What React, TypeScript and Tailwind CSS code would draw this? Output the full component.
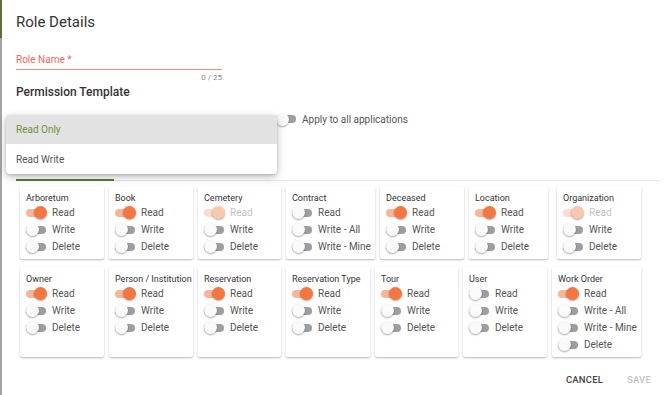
import React from 'react';

type Perm = { label: string; state: 'on' | 'off' | 'dim' };
type Entity = { name: string; width: string; perms: Perm[] };

const rw = (read: Perm['state'], labels = ['Write', 'Delete']): Perm[] => [
  { label: 'Read', state: read },
  ...labels.map((l) => ({ label: l, state: 'off' as const })),
];

const ROW_ONE: Entity[] = [
  { name: 'Arboretum', width: 'w-[84px]', perms: rw('on') },
  { name: 'Book', width: 'w-[84px]', perms: rw('on') },
  { name: 'Cemetery', width: 'w-[83px]', perms: rw('dim') },
  { name: 'Contract', width: 'w-[89px]', perms: rw('off', ['Write - All', 'Write - Mine']) },
  { name: 'Deceased', width: 'w-[84px]', perms: rw('on') },
  { name: 'Location', width: 'w-[79px] mr-[4px]', perms: rw('on') },
  { name: 'Organization', width: 'w-[84px]', perms: rw('dim') },
];

const ROW_TWO: Entity[] = [
  { name: 'Owner', width: 'w-[84px]', perms: rw('on') },
  { name: 'Person / Institution', width: 'w-[84px]', perms: rw('on') },
  { name: 'Reservation', width: 'w-[83px]', perms: rw('on') },
  { name: 'Reservation Type', width: 'w-[84px]', perms: rw('on') },
  { name: 'Tour', width: 'w-[83px]', perms: rw('on') },
  { name: 'User', width: 'w-[84px]', perms: rw('off') },
  { name: 'Work Order', width: 'w-[89px]', perms: rw('on', ['Write - All', 'Write - Mine', 'Delete']) },
];

const Toggle = ({ state }: { state: Perm['state'] }) => {
  const track =
    state === 'on' ? 'bg-[#f8b597]' : state === 'dim' ? 'bg-[#fcdccd]' : 'bg-[#9e9e9e]';
  const thumb =
    state === 'on'
      ? 'left-[8px] bg-[#f5773f]'
      : state === 'dim'
        ? 'left-[8px] bg-[#fbc8af]'
        : 'left-0 bg-[#fafafa]';
  return (
    <div className="relative w-[20px] h-[13px] flex items-center flex-shrink-0">
      <div className={`w-full h-[8px] rounded-full ${track}`}></div>
      <div
        className={`absolute top-0 w-[13px] h-[13px] rounded-full shadow-[0_1px_2px_rgba(0,0,0,0.35)] ${thumb}`}
      ></div>
    </div>
  );
};

const EntityCard = ({ entity }: { entity: Entity }) => (
  <div
    className={`${entity.width} bg-white rounded-[2px] pt-[6px] pb-[4px] pl-[6px] shadow-[0_1px_3px_rgba(0,0,0,0.18),0_1px_1px_rgba(0,0,0,0.12)]`}
  >
    <div className="h-[12px] leading-[12px] text-[9px] text-[#333] whitespace-nowrap">
      {entity.name}
    </div>
    {entity.perms.map((p) => (
      <div key={p.label} className="h-[17px] flex items-center gap-[6px]">
        <Toggle state={p.state} />
        <span
          className={`text-[10px] whitespace-nowrap ${p.state === 'dim' ? 'text-[#c2c2c2]' : 'text-[#555]'}`}
        >
          {p.label}
        </span>
      </div>
    ))}
  </div>
);

export default function App() {
  return (
    <div
      className="relative w-[670px] h-[395px] bg-white flex overflow-hidden"
      style={{ fontFamily: 'Roboto, "Liberation Sans", sans-serif' }}
    >
      {/* page edge behind the dialog */}
      <div className="w-[2px] flex flex-col">
        <div className="h-[38px] bg-[#5d6e3c]"></div>
        <div className="flex-1 bg-[#a3a3a3]"></div>
      </div>

      <div className="ml-[14px] w-[644px] flex flex-col">
        <div className="mt-[12px] h-[20px] leading-[20px] text-[15px] text-[#333]">Role Details</div>

        {/* Role name field */}
        <div className="w-[206px] flex flex-col">
          <div className="mt-[22px] h-[12px] leading-[12px] text-[10px] text-[#f3665d]">Role Name *</div>
          <div className="mt-[3px] h-px bg-[#f38a82]"></div>
          <div className="mt-[3px] h-[10px] leading-[10px] text-[8px] text-[#8a8a8a] text-right">0 / 25</div>
        </div>

        <div className="mt-[2px] h-[14px] leading-[14px] text-[12px] font-medium text-[#333]">
          Permission Template
        </div>

        <div className="mt-[13px] h-[14px] flex items-center">
          <div className="w-[260px]"></div>
          <Toggle state="off" />
          <span className="ml-[6px] text-[10px] text-[#555]">Apply to all applications</span>
        </div>

        {/* tabs */}
        <div className="mt-[53px] h-[2px] flex items-end">
          <div className="w-[98px] h-[2px] bg-[#5a7d32]"></div>
          <div className="flex-1 h-px bg-[#e8e8e8]"></div>
        </div>

        <div className="mt-[5px] pl-[4px] flex flex-col gap-[8px]">
          <div className="flex gap-[5px]">
            {ROW_ONE.map((e) => (
              <EntityCard key={e.name} entity={e} />
            ))}
          </div>
          <div className="flex gap-[5px]">
            {ROW_TWO.map((e) => (
              <EntityCard key={e.name} entity={e} />
            ))}
          </div>
        </div>

        <div className="mt-[18px] pr-[9px] flex justify-end items-center gap-[24px] text-[9.5px] font-medium leading-[10px] tracking-[0.02em]">
          <span className="text-[#444]">CANCEL</span>
          <span className="text-[#c4c4c4]">SAVE</span>
        </div>
      </div>

      {/* open template menu */}
      <div className="absolute left-[6px] top-[115px] w-[271px] bg-white rounded-[4px] shadow-[0_3px_8px_rgba(0,0,0,0.25),0_1px_3px_rgba(0,0,0,0.15)] overflow-hidden">
        <div className="h-[29px] pl-[10px] flex items-center bg-[#e2e2e2] text-[10px] text-[#6d9140]">
          Read Only
        </div>
        <div className="h-[30px] pl-[10px] flex items-center text-[10px] text-[#555]">Read Write</div>
      </div>
    </div>
  );
}
